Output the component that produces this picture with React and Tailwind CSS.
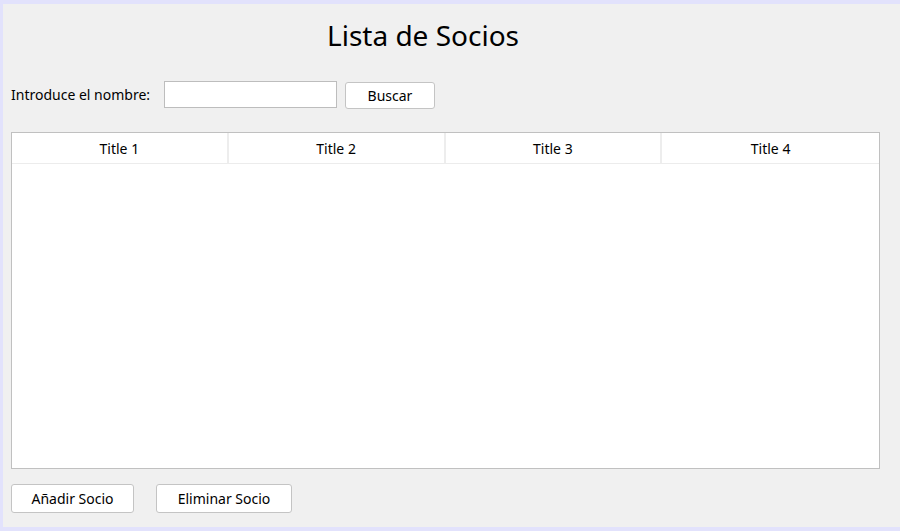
import React from 'react';

const font = { fontFamily: '"Noto Sans", "Open Sans", sans-serif' };

const Button = ({ children, className }) => (
    <button
        type="button"
        className={`bg-white border border-[#c4c4c4] rounded-[3px] text-[14px] text-black flex items-center justify-center ${className}`}
    >
        {children}
    </button>
);

const App = () => {
    const titles = ['Title 1', 'Title 2', 'Title 3', 'Title 4'];

    return (
        <div className="w-[900px] h-[531px] bg-[#e2e2fc] pt-[4px] pl-[3px] pb-[4px] overflow-hidden" style={font}>
            <div className="h-full bg-[#f0f0f0] flex flex-col">
                {/* Title */}
                <div className="h-[62px] flex items-center pl-[324px]">
                    <h1 className="text-[28px] leading-none text-black">Lista de Socios</h1>
                </div>

                {/* Search row */}
                <div className="mt-[15px] flex items-start pl-[8px]">
                    <label className="w-[153px] h-[27px] flex items-center text-[14px] text-black">Introduce el nombre:</label>
                    <input
                        type="text"
                        className="w-[173px] h-[27px] bg-white border border-[#bdbdbd] outline-none"
                    />
                    <Button className="ml-[8px] mt-[1px] w-[90px] h-[27px]">Buscar</Button>
                </div>

                {/* Table */}
                <div className="mt-[23px] ml-[8px] w-[869px] h-[337px] bg-white border border-[#c0c0c0] flex flex-col">
                    <div className="h-[31px] grid grid-cols-4 border-b border-[#ececec]">
                        {titles.map((t, i) => (
                            <div
                                key={t}
                                className={`flex items-center justify-center text-[14px] text-black ${i < 3 ? 'border-r-2 border-[#ededed]' : ''}`}
                            >
                                {t}
                            </div>
                        ))}
                    </div>
                    <div className="flex-1" />
                </div>

                {/* Bottom buttons */}
                <div className="mt-[15px] ml-[8px] flex gap-[22px]">
                    <Button className="w-[123px] h-[29px]">Añadir Socio</Button>
                    <Button className="w-[136px] h-[29px]">Eliminar Socio</Button>
                </div>
            </div>
        </div>
    );
};

export default App;
